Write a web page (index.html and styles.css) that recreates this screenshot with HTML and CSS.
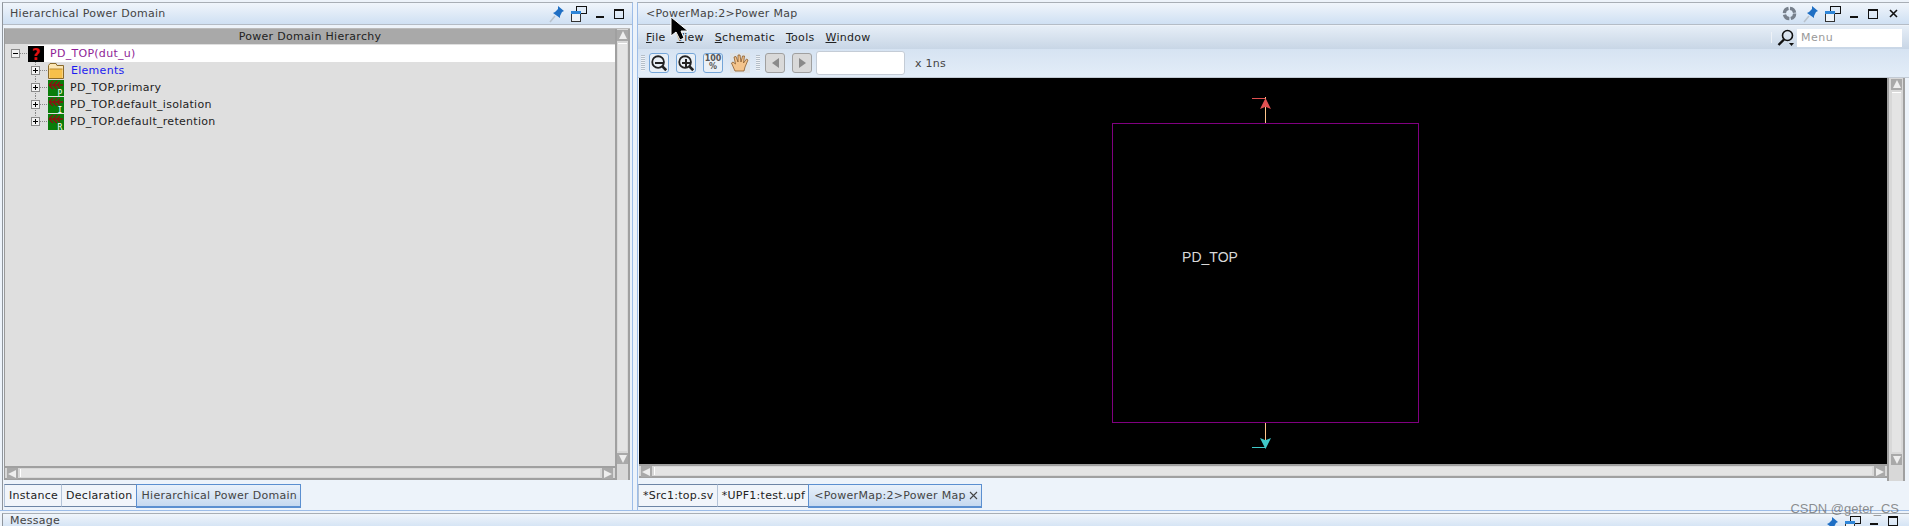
FILE: index.html
```html
<!DOCTYPE html>
<html lang="en">
<head>
    <meta charset="UTF-8">
    <title>Power Map</title>
    <link rel="stylesheet" href="styles.css">
</head>
<body>
    <svg class="defs" xmlns="http://www.w3.org/2000/svg">
        <symbol id="pin" viewBox="0 0 16 18">
            <path d="M1 17L6 11" stroke="#b9c2cc" stroke-width="1.5"/>
            <path d="M9 1L15 6L13 7L11 11L11 13L4 8L6 7L9 4Z" fill="#1f6fc4"/>
        </symbol>
        <symbol id="restore" viewBox="0 0 16 16">
            <rect x="5.5" y="0.5" width="10" height="7" fill="#dfeaf6" stroke="#111"/>
            <rect x="0.5" y="5.5" width="9" height="10" fill="#eef3f8" stroke="#333"/>
            <rect x="0" y="5" width="10" height="3" fill="#2f86d8"/>
        </symbol>
        <symbol id="plus" viewBox="0 0 9 9">
            <rect x="0.5" y="0.5" width="8" height="8" fill="#f2f2f2" stroke="#8a8a8a"/>
            <path d="M2 4.5H7M4.5 2V7" stroke="#000"/>
        </symbol>
        <symbol id="domain" viewBox="0 0 16 16">
            <rect width="16" height="16" fill="#0a7d0a"/>
            <path d="M1 5H15M1 5L5 1M1 5L5 9M5 5L9 1M5 5L9 9M9 5L12 2M9 5L12 8" stroke="#8b1010" stroke-width="1.4" fill="none"/>
        </symbol>
        <symbol id="lens" viewBox="0 0 20 20">
            <circle cx="9" cy="9" r="6.5" fill="none" stroke="#222" stroke-width="2"/>
            <path d="M13.5 13.5L18 18" stroke="#222" stroke-width="3"/>
        </symbol>
    </svg>

    <div class="main">
        <div class="panel panel-left">
            <div class="title-bar">
                <span class="title-text">Hierarchical Power Domain</span>
                <div class="title-icons">
                    <svg class="ic-pin"><use href="#pin"/></svg>
                    <svg class="ic-restore"><use href="#restore"/></svg>
                    <span class="ic-min"></span>
                    <span class="ic-max"></span>
                </div>
            </div>
            <div class="tree-frame">
                <div class="tree-col">
                    <div class="tree-head">Power Domain Hierarchy</div>
                    <div class="tree">
                        <div class="row row-root">
                            <svg class="exp exp-root" viewBox="0 0 9 9"><rect x="0.5" y="0.5" width="8" height="8" fill="#f2f2f2" stroke="#8a8a8a"/><path d="M2 4.5H7" stroke="#000"/></svg>
                            <span class="dots"></span>
                            <span class="root-sel">
                                <svg class="ic16" viewBox="0 0 16 16"><rect width="16" height="16" fill="#000"/><text x="8" y="14" class="ic-q">?</text></svg>
                                <span class="lbl lbl-root">PD_TOP(dut_u)</span>
                            </span>
                        </div>
                        <div class="row row-child">
                            <svg class="exp"><use href="#plus"/></svg>
                            <span class="dots"></span>
                            <svg class="ic16" viewBox="0 0 16 16">
                                <path d="M0.5 15.5V2.5L2 0.5H8L9 2.5H15.5V15.5Z" fill="#fbe6b4" stroke="#8a6a2a"/>
                                <rect x="1.5" y="6" width="13" height="9" fill="#f6c04a"/>
                                <path d="M1.5 6H14.5" stroke="#b88a30"/>
                            </svg>
                            <span class="lbl lbl-folder">Elements</span>
                        </div>
                        <div class="row row-child">
                            <svg class="exp"><use href="#plus"/></svg>
                            <span class="dots"></span>
                            <svg class="ic16" viewBox="0 0 16 16"><use href="#domain"/><text x="12" y="15.5" class="ic-letter">P</text></svg>
                            <span class="lbl">PD_TOP.primary</span>
                        </div>
                        <div class="row row-child">
                            <svg class="exp"><use href="#plus"/></svg>
                            <span class="dots"></span>
                            <svg class="ic16" viewBox="0 0 16 16"><use href="#domain"/><text x="12" y="15.5" class="ic-letter">I</text></svg>
                            <span class="lbl">PD_TOP.default_isolation</span>
                        </div>
                        <div class="row row-child row-last">
                            <svg class="exp"><use href="#plus"/></svg>
                            <span class="dots"></span>
                            <svg class="ic16" viewBox="0 0 16 16"><use href="#domain"/><text x="12" y="15.5" class="ic-letter">R</text></svg>
                            <span class="lbl">PD_TOP.default_retention</span>
                        </div>
                    </div>
                    <div class="hscroll">
                        <span class="arrow arrow-left"></span>
                        <span class="thumb-h"></span>
                        <span class="arrow arrow-right"></span>
                    </div>
                </div>
                <div class="vscroll">
                    <span class="arrow arrow-up"></span>
                    <span class="thumb-v"></span>
                    <span class="arrow arrow-down"></span>
                </div>
            </div>
            <div class="tabs">
                <span class="tab">Instance</span>
                <span class="tab">Declaration</span>
                <span class="tab tab-active">Hierarchical Power Domain</span>
            </div>
        </div>

        <div class="panel panel-right">
            <div class="title-bar">
                <span class="title-text">&lt;PowerMap:2&gt;Power Map</span>
                <div class="title-icons">
                    <svg class="ic-sync" viewBox="0 0 16 16"><circle cx="8" cy="8" r="5.5" fill="none" stroke="#77808c" stroke-width="3.5" stroke-dasharray="7 1.6"/></svg>
                    <svg class="ic-pin"><use href="#pin"/></svg>
                    <svg class="ic-restore"><use href="#restore"/></svg>
                    <span class="ic-min"></span>
                    <span class="ic-max"></span>
                    <svg class="ic-close" viewBox="0 0 9 9"><path d="M1 1L8 8M8 1L1 8" stroke="#111" stroke-width="1.6"/></svg>
                </div>
            </div>
            <div class="menu-bar">
                <div class="menu-items">
                    <span><u>F</u>ile</span>
                    <span><u>V</u>iew</span>
                    <span><u>S</u>chematic</span>
                    <span><u>T</u>ools</span>
                    <span><u>W</u>indow</span>
                </div>
                <div class="menu-search">
                    <span class="sep"></span>
                    <svg class="ic-search" viewBox="0 0 18 18">
                        <circle cx="10.5" cy="6.5" r="5" fill="none" stroke="#111" stroke-width="1.6"/>
                        <path d="M7 10.5L1.5 16" stroke="#111" stroke-width="2.4"/>
                        <path d="M12 14H17L14.500 17Z" fill="#111"/>
                    </svg>
                    <span class="search-box">Menu</span>
                </div>
            </div>
            <div class="tool-bar">
                <span class="grip"></span>
                <span class="tool-btn"><svg class="ic-lens"><use href="#lens"/><rect x="5" y="8" width="8" height="2" fill="#222"/></svg></span>
                <span class="tool-btn"><svg class="ic-lens"><use href="#lens"/><path d="M5 9H13M9 5V13" stroke="#222" stroke-width="2"/></svg></span>
                <span class="tool-btn btn-100">100<br>%</span>
                <svg class="ic-hand" viewBox="0 0 20 20">
                    <rect width="20" height="20" fill="#dfe3e6"/>
                    <path d="M5 18L1.500 10L3 9L5.500 11L4 4L6 3.500L8 9L8 2H10L11 9L12.500 3H14.500L13.500 10L16.500 6L18 7L15 14L14 18Z" fill="#f4c48c" stroke="#8a5a2a" stroke-width="0.8"/>
                </svg>
                <span class="grip grip-2"></span>
                <span class="nav-btn"><span class="tri tri-left"></span></span>
                <span class="nav-btn"><span class="tri tri-right"></span></span>
                <span class="time-input"></span>
                <span class="time-unit">x 1ns</span>
            </div>
            <div class="canvas-frame">
                <div class="canvas-col">
                    <svg class="canvas" viewBox="0 0 1248 386">
                        <rect x="473.500" y="45.500" width="306" height="299" fill="none" stroke="#800080"/>
                        <text x="571" y="184" class="canvas-label">PD_TOP</text>
                        <path d="M626.500 45V19" stroke="#ffc58a"/>
                        <path d="M613 20.500H626" stroke="#e05050"/>
                        <path d="M626.500 20L632 31L627 29H626L621 31Z" fill="#e05050"/>
                        <path d="M626.500 345V370" stroke="#ffc58a"/>
                        <path d="M613 369.500H626" stroke="#3fc8c8"/>
                        <path d="M626.500 371L632 360L627 362H626L621 360Z" fill="#3fc8c8"/>
                    </svg>
                    <div class="hscroll hscroll-right">
                        <span class="arrow arrow-left"></span>
                        <span class="thumb-h"></span>
                        <span class="arrow arrow-right"></span>
                    </div>
                </div>
                <div class="vscroll vscroll-right">
                    <span class="arrow arrow-up"></span>
                    <span class="thumb-v"></span>
                    <span class="arrow arrow-down"></span>
                </div>
            </div>
            <div class="tabs">
                <span class="tab">*Src1:top.sv</span>
                <span class="tab">*UPF1:test.upf</span>
                <span class="tab tab-active">&lt;PowerMap:2&gt;Power Map <svg class="tab-close" viewBox="0 0 9 9"><path d="M1 1L8 8M8 1L1 8" stroke="#444" stroke-width="1.100"/></svg></span>
            </div>
        </div>
    </div>

    <div class="message-bar">
        <span class="title-text">Message</span>
        <div class="title-icons message-icons">
            <svg class="ic-pin"><use href="#pin"/></svg>
            <svg class="ic-restore"><use href="#restore"/></svg>
            <span class="ic-min"></span>
            <span class="ic-max"></span>
        </div>
    </div>

    <!-- mouse pointer caught in the screenshot -->
    <svg class="cursor" viewBox="0 0 24 26">
        <path d="M1 1V20L6 16L10 24L14 22L11 15H18Z" fill="#000" stroke="#fff"/>
    </svg>
    <div class="watermark">CSDN @geter_CS</div>
</body>
</html>
```

FILE: styles.css
```css
:root {
    --bar-top: #e9f1fa;
    --bar-bottom: #cfe0f3;
    --pane: #edf3fa;
    --tree-bg: #dfdfdf;
    --line: #9a9a9a;
    --blue-line: #9dbde8;
}

html, body {
    margin: 0;
    height: 526px;
    overflow: hidden;
}

body {
    position: relative;
    width: 1909px;
    background: var(--pane);
    font-family: "DejaVu Sans", sans-serif;
    font-size: 11px;
    color: #222;
}

.defs {
    display: none;
}

.main {
    display: flex;
    gap: 4px;
    height: 511px;
    border-bottom: 1px solid var(--blue-line);
    box-sizing: border-box;
    padding-top: 2px;
    background: var(--pane);
}

.panel {
    display: flex;
    flex-direction: column;
    box-sizing: border-box;
    height: 508px;
    border-top: 1px solid #a8aeb5;
}

.panel-left {
    width: 633px;
    margin-left: 2px;
    border-left: 1px solid #8f959c;
    border-right: 1px solid var(--blue-line);
}

.panel-right {
    flex: 1;
    border-left: 1px solid var(--blue-line);
}

.title-bar {
    display: flex;
    align-items: center;
    justify-content: space-between;
    flex: none;
    height: 21px;
    padding-left: 7px;
    background: linear-gradient(#f0f5fb, var(--bar-bottom));
    border-bottom: 1px solid #b4bcc6;
}

.panel-right .title-bar {
    padding-left: 8px;
}

.title-text {
    color: #444;
    letter-spacing: 0.28px;
}

.title-icons {
    display: flex;
    align-items: center;
    gap: 6px;
    padding-right: 8px;
}

.panel-right .title-icons {
    padding-right: 11px;
}

.ic-pin {
    width: 16px;
    height: 18px;
}

.ic-restore {
    width: 16px;
    height: 16px;
}

.ic-sync {
    width: 15px;
    height: 15px;
}

.ic-min {
    width: 8px;
    height: 2px;
    margin: 7px 4px 0 3px;
    background: #111;
}

.ic-max {
    width: 8px;
    height: 7px;
    border: 1px solid #111;
    border-top-width: 2px;
}

.ic-close {
    width: 9px;
    height: 9px;
    margin-left: 5px;
}

/* left tree */

.tree-frame {
    display: flex;
    flex: 1;
    min-height: 0;
    margin: 3px 2px 4px 1px;
    border-left: 1px solid #999;
    border-top: 1px solid #bbb;
}

.tree-col {
    display: flex;
    flex: 1;
    flex-direction: column;
    min-width: 0;
}

.tree-head {
    flex: none;
    height: 15px;
    line-height: 15px;
    text-align: center;
    background: #a9a9a9;
    color: #222;
    letter-spacing: 0.3px;
}

.tree {
    flex: 1;
    padding-top: 1px;
    background: var(--tree-bg);
}

.row {
    display: flex;
    align-items: center;
    height: 17px;
    position: relative;
}

.row-root {
    padding-left: 6px;
}

.row-child {
    padding-left: 26px;
}

.row-child::before {
    content: "";
    position: absolute;
    left: 30px;
    top: 0;
    height: 17px;
    border-left: 1px dotted #888;
}

.row-last::before {
    height: 9px;
}

.exp {
    position: relative;
    flex: none;
    width: 9px;
    height: 9px;
}

.dots {
    flex: none;
    width: 7px;
    margin-right: 1px;
    border-top: 1px dotted #888;
}

.root-sel {
    display: flex;
    flex: 1;
    align-items: center;
    height: 17px;
    background: #fff;
}

.ic16 {
    flex: none;
    width: 16px;
    height: 16px;
}

.lbl {
    margin-left: 6px;
    letter-spacing: 0.28px;
}

.lbl-root {
    color: #8e1d96;
}

.lbl-folder {
    color: #1c1cf0;
    margin-left: 7px;
}

.ic-q {
    font-family: "DejaVu Sans", sans-serif;
    font-size: 15px;
    font-weight: bold;
    text-anchor: middle;
    fill: #e01010;
}

.ic-letter {
    font-family: "DejaVu Sans Mono", monospace;
    font-size: 8px;
    text-anchor: middle;
    fill: #fff;
}

/* scrollbars */

.hscroll {
    display: flex;
    align-items: center;
    flex: none;
    gap: 2px;
    height: 12px;
    padding: 0 2px;
    background: #d8d8d8;
    border-top: 2px solid #a0a0a0;
    border-bottom: 2px solid #a0a0a0;
    box-sizing: border-box;
    height: 14px;
}

.vscroll {
    display: flex;
    flex-direction: column;
    align-items: center;
    flex: none;
    width: 15px;
    gap: 2px;
    padding: 1px 0 16px;
    box-sizing: border-box;
    background: #d8d8d8;
    border-left: 2px solid #a0a0a0;
    border-right: 2px solid #a0a0a0;
}

.thumb-h {
    flex: 1;
    height: 8px;
    background: #e4e4e4;
    border-left: 1px solid #fff;
}

.thumb-v {
    flex: 1;
    width: 9px;
    background: #e4e4e4;
    border-top: 1px solid #fff;
}

.arrow {
    flex: none;
    box-sizing: border-box;
    width: 11px;
    height: 11px;
    background: #a9a9a9;
    position: relative;
}

.arrow::after {
    content: "";
    position: absolute;
    width: 0;
    height: 0;
}

.arrow-left::after {
    left: 1px;
    top: 2px;
    border: 4px solid transparent;
    border-left: 0;
    border-right: 8px solid #eee;
}

.arrow-right::after {
    left: 2px;
    top: 2px;
    border: 4px solid transparent;
    border-right: 0;
    border-left: 8px solid #eee;
}

.arrow-up::after {
    left: 2px;
    top: 1px;
    border: 4px solid transparent;
    border-top: 0;
    border-bottom: 8px solid #eee;
}

.arrow-down::after {
    left: 2px;
    top: 2px;
    border: 4px solid transparent;
    border-bottom: 0;
    border-top: 8px solid #eee;
}

/* tabs */

.tabs {
    display: flex;
    flex: none;
    height: 24px;
    box-sizing: border-box;
    border-bottom: 0;
    margin-bottom: 2px;
    padding-left: 1px;
}

.panel-right .tabs {
    padding-left: 0;
}

.tab {
    display: flex;
    align-items: center;
    padding: 0 3px 0 4px;
    height: 23px;
    box-sizing: border-box;
    background: #f1f5fa;
    border: 1px solid #6d85a5;
    border-left-color: #b4c4d8;
    border-right: 0;
    letter-spacing: 0.28px;
}

.tab-active {
    padding: 0 3px 0 5px;
    height: 24px;
    background: linear-gradient(#e9f1fa, #c6d9f0);
    border: 1px solid #5b8fd0;
    border-bottom-width: 2px;
    color: #444;
}

.tab-close {
    width: 9px;
    height: 9px;
    margin-left: 3px;
}

/* right panel */

.menu-bar {
    display: flex;
    align-items: center;
    justify-content: space-between;
    flex: none;
    height: 23px;
    margin-top: 1px;
    background: linear-gradient(#e6eef7, #c8d6e6);
}

.menu-items {
    display: flex;
    gap: 11px;
    padding-left: 8px;
}

.menu-items span {
    letter-spacing: 0.28px;
}

.menu-search {
    display: flex;
    align-items: center;
    padding-right: 7px;
}

.sep {
    width: 1px;
    height: 11px;
    margin-right: 5px;
    background: #eef2f7;
}

.ic-search {
    width: 18px;
    height: 18px;
    margin-right: 2px;
}

.search-box {
    width: 105px;
    height: 18px;
    line-height: 18px;
    padding-left: 4px;
    box-sizing: border-box;
    background: #fff;
    color: #999;
    letter-spacing: 0.5px;
}

.tool-bar {
    display: flex;
    align-items: center;
    flex: none;
    height: 29px;
    background: linear-gradient(#d6e3f2, #e3edf8);
    border-bottom: 1px solid #c2cad4;
    box-sizing: border-box;
}

.grip {
    width: 4px;
    height: 16px;
    margin: 0 4px 0 3px;
    background: repeating-linear-gradient(#b4bec8 0 1px, #eef2f7 1px 2px);
}

.grip-2 {
    margin: 0 5px 0 6px;
}

.tool-btn {
    display: flex;
    align-items: center;
    justify-content: center;
    width: 20px;
    height: 20px;
    margin-right: 7px;
    box-sizing: border-box;
    background: #eaf0f6;
    border: 1px solid #74a5d8;
    border-radius: 3px;
}

.ic-lens {
    width: 18px;
    height: 18px;
}

.btn-100 {
    font-size: 8px;
    font-weight: bold;
    line-height: 8px;
    text-align: center;
    color: #555;
}

.ic-hand {
    width: 20px;
    height: 20px;
}

.nav-btn {
    display: flex;
    align-items: center;
    justify-content: center;
    width: 20px;
    height: 20px;
    margin-right: 7px;
    box-sizing: border-box;
    background: #d9d9d9;
    border: 1px solid #a0a0a0;
    border-radius: 3px;
}

.tri {
    width: 0;
    height: 0;
    border: 5px solid transparent;
}

.tri-left {
    border-left: 0;
    border-right: 7px solid #8a8a8a;
}

.tri-right {
    border-right: 0;
    border-left: 7px solid #8a8a8a;
}

.time-input {
    width: 89px;
    height: 24px;
    margin: 0 10px 0 -3px;
    box-sizing: border-box;
    background: #fff;
    border: 1px solid #c4ccd6;
    border-radius: 3px;
}

.time-unit {
    color: #444;
    letter-spacing: 0.28px;
}

.canvas-frame {
    display: flex;
    flex: 1;
    min-height: 0;
    margin: 0 4px 3px 1px;
}

.canvas-col {
    display: flex;
    flex: 1;
    flex-direction: column;
    min-width: 0;
}

.canvas {
    display: block;
    width: 1248px;
    height: 386px;
    background: #000;
}

.canvas-label {
    font-family: "Liberation Sans", sans-serif;
    font-size: 14px;
    fill: #d8d8d8;
    text-anchor: middle;
}

.vscroll-right {
    width: 18px;
}

/* message panel, cut off by the window edge */

.message-bar {
    display: flex;
    justify-content: space-between;
    height: 15px;
    margin: 2px 0 0 2px;
    padding-left: 7px;
    background: linear-gradient(#f0f5fb, var(--bar-bottom));
    border-top: 1px solid #a8aeb5;
    border-left: 1px solid #8f959c;
}

.message-icons {
    padding-right: 11px;
    padding-top: 2px;
    align-items: flex-start;
}

.cursor {
    position: absolute;
    left: 670px;
    top: 16px;
    width: 24px;
    height: 26px;
}

.watermark {
    position: absolute;
    right: 10px;
    top: 501px;
    font-family: "Liberation Sans", sans-serif;
    font-size: 13px;
    color: rgba(70, 70, 70, 0.6);
}
```
